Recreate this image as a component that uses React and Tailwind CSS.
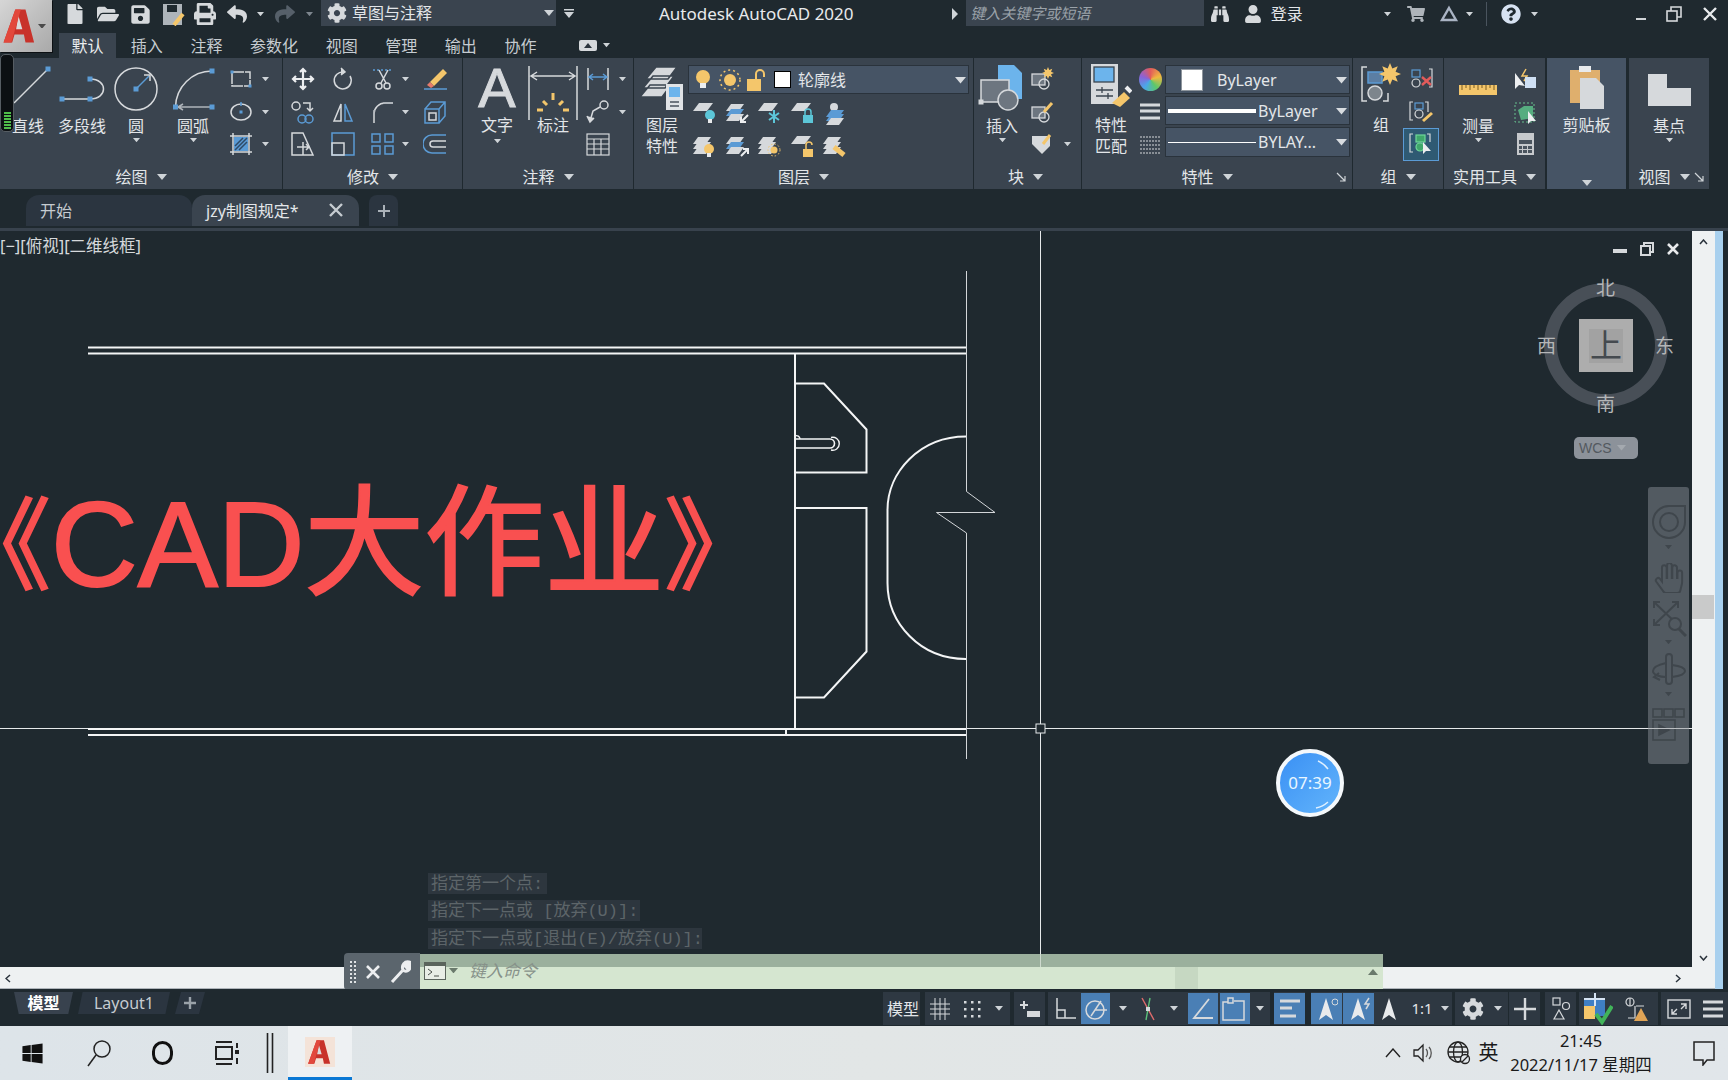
import React from 'react';
import { FaFile, FaFolderOpen, FaSave, FaPrint, FaReply, FaShare, FaCog, FaBinoculars, FaUser, FaShoppingCart, FaQuestionCircle, FaWindows, FaHandPaper } from 'react-icons/fa';

const G = '#d6d9dc', B = '#5b9bd5', Y = '#f4c66b', D = '#aeb4ba';

const S = ({ w = 24, h = 24, sw = 1.5, children }) => (
  <svg width={w} height={h} viewBox={`0 0 ${w} ${h}`} fill="none" stroke={G} strokeWidth={sw} className="block shrink-0">{children}</svg>
);
const Gp = ({ x, y, s = 5, c = B }) => <rect x={x - s / 2} y={y - s / 2} width={s} height={s} fill={c} stroke="none" />;
const Caret = ({ s = 9, c = '#cfd4d8' }) => (
  <svg width={s} height={s * 0.6} viewBox="0 0 10 6" className="block shrink-0"><path d="M0 0H10L5 6z" fill={c} /></svg>
);
const Launcher = () => (
  <svg width="10" height="10" viewBox="0 0 10 10" fill="none" stroke="#cfd4d8" strokeWidth="1.2" className="block shrink-0"><path d="M1 1L9 9M9 4V9H4" /></svg>
);
const Layer = ({ y, c = G, x = 0 }) => <path d={`M${x + 6} ${y}h13l-5 7h-13z`} fill={c} stroke="none" />;

function Panel({ className, title, launcher, children, pad = '', foot = '' }) {
  return (
    <div className={`shrink-0 h-[131px] bg-[#3a444f] flex flex-col ${className}`}>
      <div className={`h-[107px] flex ${pad}`}>{children}</div>
      <div className={`h-[24px] flex items-center justify-center gap-[9px] relative text-[16px] leading-[24px] text-[#e3e6e9] ${foot}`}>
        <span>{title}</span>
        <Caret s={10} />
        {launcher && <span className="absolute right-[6px] top-[7px]"><Launcher /></span>}
      </div>
    </div>
  );
}

function Big({ className, label, caret, children, two }) {
  return (
    <div className={`shrink-0 flex flex-col items-center pt-[5px] ${className}`}>
      <div className={`${two ? 'h-[52px]' : 'h-[54px]'} flex justify-center`}>{children}</div>
      <div className={`text-[16px] text-[#e3e6e9] text-center whitespace-pre-line ${two ? 'leading-[21px]' : 'leading-[18px]'}`}>{label}</div>
      {caret && <div className="mt-[3px]"><Caret s={7} /></div>}
    </div>
  );
}

const Col = ({ className, children }) => <div className={`shrink-0 flex flex-col pt-[5px] ${className}`}>{children}</div>;
const Row = ({ children, className = '' }) => <div className={`h-[32.5px] flex items-center justify-center ${className}`}>{children}</div>;

function Drop({ className, children }) {
  return (
    <div className={`bg-[#465465] shadow-[0_0_0_1px_#2a333c] flex items-center relative text-[#e3e6e9] text-[16px] ${className}`}>
      {children}
      <span className="absolute right-[2px] top-[11px]"><Caret s={11} c="#d8dce0" /></span>
    </div>
  );
}

const Cell = ({ className, children }) => <div className={`shrink-0 h-full flex items-center justify-center ${className}`}>{children}</div>;

const ALogo = ({ s = 46 }) => (
  <svg width={s} height={s} viewBox="0 0 46 46" className="block shrink-0">
    <path d="M17 2H30L41 44H30L28 34H16L13 44H2Z" fill="#c8322a" />
    <path d="M21 10L18 27H26Z" fill="#dbdbdb" />
    <path d="M17 2H24L12 44H2Z" fill="#e2483c" />
  </svg>
);

function TitleBar() {
  return (
    <div className="h-[28px] flex items-center text-[#e3e6e9]">
      <Cell className="w-[7px]" />
      <Cell className="w-[32px]"><FaFile size={20} color={G} /></Cell>
      <Cell className="w-[33px]"><FaFolderOpen size={22} color={G} /></Cell>
      <Cell className="w-[32px]"><FaSave size={21} color={G} /></Cell>
      <Cell className="w-[33px]">
        <S w={24} h={24}><rect x="2" y="2" width="19" height="21" fill={D} stroke="none" /><rect x="6" y="3" width="10" height="7" fill="#1f292f" stroke="none" /><path d="M13 23L22 12" stroke={Y} strokeWidth="4" /></S>
      </Cell>
      <Cell className="w-[32px]"><FaPrint size={22} color={G} /></Cell>
      <Cell className="w-[32px]"><FaReply size={20} color={G} /></Cell>
      <Cell className="w-[14px]"><Caret s={7} /></Cell>
      <Cell className="w-[2px]" />
      <Cell className="w-[32px]"><FaShare size={20} color="#56606a" /></Cell>
      <Cell className="w-[16px]"><Caret s={7} c="#7d868e" /></Cell>
      <Cell className="w-[4px]" />
      <div className="w-[240px] h-[26px] self-start bg-[#3a444f] flex items-center relative text-[16px]">
        <span className="ml-[6px] mr-[5px]"><FaCog size={20} color={G} /></span>草图与注释
        <span className="absolute right-[2px] top-[10px]"><Caret s={10} /></span>
      </div>
      <Cell className="w-[26px]">
        <svg width="10" height="10" viewBox="0 0 10 10" className="block"><path d="M0 0H10V1.5H0zM0 3H10L5 9z" fill="#cfd4d8" /></svg>
      </Cell>
      <div className="w-[79px]" />
      <div className="w-[300px] text-[17px] text-[#e8eaec] whitespace-nowrap">Autodesk AutoCAD 2020</div>
      <svg width="6" height="12" viewBox="0 0 6 12" className="block shrink-0"><path d="M0 0L6 6L0 12z" fill="#cfd4d8" /></svg>
      <div className="w-[8px]" />
      <div className="w-[243px] h-[26px] self-start bg-[#3a444f] flex items-center pl-[4px] italic text-[15px] text-[#9aa2a9]">键入关键字或短语</div>
      <Cell className="w-[33px]"><FaBinoculars size={18} color={G} /></Cell>
      <Cell className="w-[33px]"><FaUser size={18} color={G} /></Cell>
      <div className="w-[1px]" />
      <div className="w-[113px] text-[16px]">登录</div>
      <Cell className="w-[12px]"><Caret s={7} /></Cell>
      <Cell className="w-[46px]"><FaShoppingCart size={18} color={D} /></Cell>
      <Cell className="w-[20px]">
        <S w={20} h={18} sw={2.4}><path d="M10 3L17 15H3Z" stroke="#aab4c4" /></S>
      </Cell>
      <Cell className="w-[20px]"><Caret s={7} /></Cell>
      <div className="w-[14px] flex justify-center"><div className="w-px h-[24px] bg-[#4a545e]" /></div>
      <Cell className="w-[36px]"><FaQuestionCircle size={20} color="#d7e2f2" /></Cell>
      <Cell className="w-[10px]"><Caret s={7} /></Cell>
      <div className="w-[89px]" />
      <Cell className="w-[30px]"><div className="w-[10px] h-[2px] bg-[#d0d4d8] mt-[10px]" /></Cell>
      <Cell className="w-[36px]">
        <S w={16} h={16} sw={1.6}><rect x="1" y="5" width="10" height="10" /><path d="M5 5V1H15V11H11" /></S>
      </Cell>
      <Cell className="w-[36px]">
        <S w={14} h={14} sw={2.4}><path d="M1 1L13 13M13 1L1 13" stroke="#e8eaec" /></S>
      </Cell>
    </div>
  );
}

function Tabs() {
  const t = ['插入', '注释', '参数化', '视图', '管理', '输出', '协作'];
  return (
    <div className="h-[30px] flex items-end text-[16px] text-[#c6ccd1]">
      <div className="w-[7px]" />
      <div className="w-[57px] h-[25px] bg-[#3a444f] text-[#eceef0] flex items-center justify-center leading-none">默认</div>
      <div className="flex h-[25px] items-center pl-[1px]">
        {t.map((x) => <div key={x} className="px-[13.8px] leading-none">{x}</div>)}
        <div className="ml-[29px] w-[18px] h-[11px] rounded-[2px] bg-[#d6d9dc] flex items-center justify-center">
          <svg width="8" height="5" viewBox="0 0 8 5" className="block"><path d="M0 5L4 0L8 5z" fill="#2a333c" /></svg>
        </div>
        <div className="ml-[6px]"><Caret s={7} /></div>
      </div>
    </div>
  );
}

const Ic = {
  line: <S w={56} h={55}><path d="M14 40L48 6" /><Gp x={48} y={6} /><Gp x={9} y={45} /></S>,
  pline: <S w={52} h={55}><path d="M6 36H34M34 16C52 16 52 36 34 36" /><Gp x={6} y={36} /><Gp x={34} y={36} /><Gp x={34} y={16} /></S>,
  circle: <S w={56} h={55}><circle cx="28" cy="26" r="21" /><path d="M28 26L41 13" stroke={B} /><path d="M36 12H42V18" stroke={G} /><Gp x={28} y={26} /></S>,
  arc: <S w={58} h={55}><path d="M11.5 44C12 24 28 8 48 8" /><path d="M14 44H46M19 41L14 44L19 47" stroke={D} /><Gp x={11.5} y={44} /><Gp x={48} y={44} /><Gp x={48} y={8} /></S>,
  rect: <S><rect x="3" y="5" width="18" height="14" strokeDasharray="12 1" /><Gp x={3} y={5} s={3} /><Gp x={21} y={19} s={3} /></S>,
  ell: <S><ellipse cx="12" cy="12" rx="10" ry="8" /><Gp x={12} y={12} s={3} /><path d="M12 2V6" stroke={B} /></S>,
  hatch: <S><path d="M1 4H23M1 20H23M4 1V23M20 1V23" /><rect x="5" y="5" width="14" height="14" fill={B} stroke="none" /><path d="M6 18L18 6M10 18L18 10M6 14L14 6" stroke="#2f4a66" /></S>,
  move: <S sw={2.2}><path d="M12 2V22M2 12H22M9 5L12 2L15 5M9 19L12 22L15 19M5 9L2 12L5 15M19 9L22 12L19 15" stroke="#eceef0" /></S>,
  rot: <S><path d="M13 5A8.5 8.5 0 1 0 19 9" /><path d="M10 1L14 5L10 8" fill={G} /></S>,
  trim: <S><path d="M2 3H22" stroke={B} strokeDasharray="2 2" /><path d="M8 3L15 16M17 3L10 16" /><circle cx="8" cy="19" r="3" /><circle cx="16" cy="19" r="3" /></S>,
  erase: <S><path d="M7 15L20 2L24 6L11 19Z" fill={Y} stroke="none" /><path d="M4 18L7 15L11 19L8 21Z" fill="#e57a6b" stroke="none" /><path d="M1 22H24" stroke={B} /></S>,
  copy: <S><circle cx="5" cy="6" r="4" /><path d="M12 3H19V10M16 8L19 11L22 8" /><circle cx="11" cy="19" r="4" stroke={B} /><circle cx="18" cy="19" r="4" stroke={B} /></S>,
  mirror: <S><path d="M10 4V21H3Z" /><path d="M14 4V21H21Z" stroke={B} /></S>,
  fillet: <S><path d="M3 23V14C3 8 8 3 14 3H22" /><path d="M3 16V10M12 3H22" stroke={D} /></S>,
  box: <S><path d="M2 9H16V23H2ZM2 9L8 2H22V16L16 23M16 9L22 2" stroke={B} /><rect x="6" y="13" width="7" height="7" stroke={G} /></S>,
  stretch: <S><path d="M1 1H12L22 23H1Z" /><path d="M6 15H18M15 12L18 15L15 18M12 10V23" stroke={G} /></S>,
  scale: <S><rect x="1" y="1" width="22" height="22" stroke={B} /><rect x="1" y="11" width="12" height="12" /></S>,
  array: <S><g stroke={B}><rect x="1" y="2" width="8" height="8" /><rect x="14" y="2" width="8" height="8" /><rect x="1" y="14" width="8" height="8" /><rect x="14" y="14" width="8" height="8" /></g></S>,
  offset: <S><path d="M23 3H9A9 9 0 0 0 9 21H23" stroke={B} /><path d="M23 9H10A3 3 0 0 0 10 15H23" stroke={G} /></S>,
  dim: <S w={50} h={58} sw={1.5}><path d="M1 3V57M49 3V57M3 13H47M9 9L3 13L9 17M41 9L47 13L41 17" /><g fill="none" stroke={Y} strokeWidth="3"><path d="M25 30V37M15 38L19 42M35 38L31 42M9 47H15M35 47H41" /></g></S>,
  dimS: <S><path d="M2 1V23M22 1V23" /><path d="M3 10H21M7 7L3 10L7 13M17 7L21 10L17 13" stroke={B} /></S>,
  leader: <S><circle cx="18" cy="5" r="4" /><path d="M14 7L7 11L4 21" /><path d="M1 16L4 22L8 18" fill={G} /></S>,
  table: <S sw={1.2}><rect x="1" y="2" width="22" height="21" /><path d="M1 7H23M1 12H23M1 17H23M8 7V23M15 7V23" /></S>,
};

function LayerIcon({ kind }) {
  const bulb = (x, y, c) => <g stroke="none"><circle cx={x} cy={y} r="5" fill={c} /><rect x={x - 2} y={y + 4} width="4" height="4" fill="#e8eaec" /></g>;
  const lock = (x, y, c, open) => <g><path d={open ? `M${x - 2} ${y}V${y - 4}a3 3 0 0 1 6 0` : `M${x - 3} ${y}V${y - 3}a3 3 0 0 1 6 0V${y}`} stroke={c} strokeWidth="1.5" /><rect x={x - 5} y={y} width="10" height="8" fill={c} stroke="none" /></g>;
  const stack = <g><Layer y={3} /><Layer y={8} c={B} /><Layer y={13} c={G} /></g>;
  const map = {
    a: <g><path d="M7 2h14l-6 8h-14z" fill={G} stroke="none" />{bulb(18, 14, '#5cc6d8')}</g>,
    b: <g>{stack}<path d="M23 14L16 21M16 16V21H21" stroke="#eceef0" strokeWidth="2" /></g>,
    c: <g><path d="M7 2h14l-6 8h-14z" fill={G} stroke="none" /><path d="M17 9V22M12 12L22 19M22 12L12 19" stroke="#5cc6d8" strokeWidth="2" /></g>,
    d: <g><path d="M7 2h14l-6 8h-14z" fill={G} stroke="none" />{lock(18, 14, '#5cc6d8')}</g>,
    e: <g><circle cx="12" cy="6" r="4" fill={G} stroke="none" /><Layer y={9} c={B} x={3} /><Layer y={13} c={B} x={3} /><Layer y={17} c={G} x={3} /></g>,
    f: <g><Layer y={3} /><Layer y={8} /><Layer y={13} />{bulb(17, 15, Y)}</g>,
    g: <g>{stack}<path d="M16 22L23 15M18 15H23V20" stroke="#eceef0" strokeWidth="2" /></g>,
    h: <g><Layer y={3} /><Layer y={8} /><Layer y={13} /><circle cx="17" cy="16" r="3.5" fill={Y} stroke="none" /><circle cx="17" cy="16" r="6" stroke={Y} strokeDasharray="1.5 2" /></g>,
    i: <g><path d="M7 2h14l-6 8h-14z" fill={G} stroke="none" />{lock(18, 15, Y, true)}</g>,
    j: <g><Layer y={3} /><Layer y={8} /><Layer y={13} /><path d="M12 13L22 21" stroke={Y} strokeWidth="5" /></g>,
  };
  return <S w={26} h={24} sw={1}>{map[kind]}</S>;
}

const Spark = ({ x, y, r = 10 }) => {
  const pts = [];
  for (let i = 0; i < 16; i++) {
    const a = (i / 16) * Math.PI * 2;
    const q = i % 2 ? r * 0.55 : r;
    pts.push(`${x + Math.cos(a) * q},${y + Math.sin(a) * q}`);
  }
  return <polygon points={pts.join(' ')} fill={Y} stroke="none" />;
};

function Ribbon() {
  return (
    <div className="h-[131px] flex gap-[1px] relative">
      <Panel className="w-[282px]" title="绘图">
        <Big className="w-[56px]" label="直线">{Ic.line}</Big>
        <Big className="w-[52px]" label="多段线">{Ic.pline}</Big>
        <Big className="w-[56px]" label="圆" caret>{Ic.circle}</Big>
        <Big className="w-[58px]" label="圆弧" caret>{Ic.arc}</Big>
        <Col className="w-[38px]"><Row>{Ic.rect}</Row><Row>{Ic.ell}</Row><Row>{Ic.hatch}</Row></Col>
        <Col className="w-[10px]"><Row><Caret s={7} /></Row><Row><Caret s={7} /></Row><Row><Caret s={7} /></Row></Col>
      </Panel>
      <Panel className="w-[179px]" title="修改">
        <Col className="w-[40px]"><Row>{Ic.move}</Row><Row>{Ic.copy}</Row><Row>{Ic.stretch}</Row></Col>
        <Col className="w-[40px]"><Row>{Ic.rot}</Row><Row>{Ic.mirror}</Row><Row>{Ic.scale}</Row></Col>
        <Col className="w-[40px]"><Row>{Ic.trim}</Row><Row>{Ic.fillet}</Row><Row>{Ic.array}</Row></Col>
        <Col className="w-[4px]"><Row><Caret s={7} /></Row><Row><Caret s={7} /></Row><Row><Caret s={7} /></Row></Col>
        <Col className="w-[55px]"><Row>{Ic.erase}</Row><Row>{Ic.box}</Row><Row>{Ic.offset}</Row></Col>
      </Panel>
      <Panel className="w-[170px]" title="注释" pad="pl-[5px]">
        <Big className="w-[58px]" label="文字" caret two>
          <span className="text-[56px] leading-[50px] text-[#d6d9dc] [-webkit-text-stroke:1px_#d6d9dc] [font-family:'Liberation_Sans',sans-serif]">A</span>
        </Big>
        <Big className="w-[54px]" label="标注" two>{Ic.dim}</Big>
        <Col className="w-[36px]"><Row>{Ic.dimS}</Row><Row>{Ic.leader}</Row><Row>{Ic.table}</Row></Col>
        <Col className="w-[12px]"><Row><Caret s={7} /></Row><Row><Caret s={7} /></Row></Col>
      </Panel>
      <Panel className="w-[339px]" title="图层" pad="pl-[5px]">
        <Big className="w-[46px]" label={'图层\n特性'} two>
          <S w={46} h={48}><path d="M17 4h21l-9 12h-22zM14 13h21l-9 12h-22zM11 22h21l-9 12h-22z" fill={G} stroke="#3a444f" /><rect x="27" y="21" width="17" height="26" fill="#e0e3e6" stroke="none" /><rect x="30" y="24" width="11" height="10" fill="#6cb4ec" stroke="none" /><path d="M31 39H40M31 43H40" stroke="#49535e" /></S>
        </Big>
        <div className="flex flex-col pt-[8px] pl-[4px]">
          <Drop className="w-[279px] h-[27px]">
            <div className="w-[28px] flex justify-center"><S w={20} h={24} sw={1}><circle cx="10" cy="9" r="7" fill={Y} stroke="none" /><rect x="7" y="15" width="6" height="5" fill="#eceef0" stroke="none" /></S></div>
            <div className="w-[26px] flex justify-center"><S w={24} h={24} sw={1.5}><circle cx="12" cy="12" r="6" fill={Y} stroke="none" /><circle cx="12" cy="12" r="10" stroke={Y} strokeDasharray="2 3" /></S></div>
            <div className="w-[26px] flex justify-center"><S w={22} h={24} sw={2}><path d="M11 12V6a4 4 0 0 1 8 0V9" stroke={Y} /><rect x="2" y="11" width="14" height="12" fill={Y} stroke="none" /></S></div>
            <div className="w-[17px] h-[17px] ml-[5px] bg-white border border-black" />
            <span className="ml-[7px]">轮廓线</span>
          </Drop>
          <div className="flex h-[33px] items-center mt-[3px]">
            {['a', 'b', 'c', 'd', 'e'].map((k) => <div key={k} className="w-[32.5px] flex justify-center"><LayerIcon kind={k} /></div>)}
          </div>
          <div className="flex h-[33px] items-center">
            {['f', 'g', 'h', 'i', 'j'].map((k) => <div key={k} className="w-[32.5px] flex justify-center"><LayerIcon kind={k} /></div>)}
          </div>
        </div>
      </Panel>
      <Panel className="w-[107px]" title="块" pad="pl-[4px]" foot="pr-[4px]">
        <Big className="w-[48px]" label="插入" caret>
          <S w={48} h={50}>
            <path d="M20 2H36L44 10V36H20Z" fill="#6cb4ec" stroke="none" />
            <rect x="3" y="17" width="28" height="22" fill="#6d7680" stroke={G} />
            <circle cx="30" cy="37" r="10" fill="#6d7680" stroke={G} />
            <Gp x={3} y={39} c={G} />
          </S>
        </Big>
        <Col className="w-[32px]">
          <Row><S sw={1.3}><rect x="2" y="7" width="13" height="11" fill="#6d7680" /><circle cx="14" cy="17" r="5" /><Spark x={18} y={6} r={6} /></S></Row>
          <Row><S sw={1.3}><rect x="2" y="7" width="13" height="11" fill="#6d7680" /><circle cx="14" cy="17" r="5" /><path d="M14 12L22 3" stroke={Y} strokeWidth="3" /></S></Row>
          <Row><S sw={1}><path d="M2 4H20V14L12 22L2 12Z" fill={G} stroke="none" /><path d="M13 12L20 3" stroke={Y} strokeWidth="3" /></S></Row>
        </Col>
        <Col className="w-[18px]"><Row /><Row /><Row><Caret s={7} /></Row></Col>
      </Panel>
      <Panel className="w-[270px]" title="特性" launcher pad="pl-[8px]" foot="pr-[20px]">
        <Big className="w-[42px]" label={'特性\n匹配'} two>
          <S w={42} h={44} sw={1.3}>
            <rect x="1" y="1" width="27" height="40" fill="#d6d9dc" stroke="none" />
            <rect x="4" y="4" width="20" height="15" fill="#6cb4ec" stroke="#3a444f" />
            <path d="M6 27H23M6 33H23M12 24V30M18 30V36" stroke="#3a444f" />
            <path d="M22 40L34 29L40 35L30 44Z" fill={Y} stroke="none" /><path d="M36 24L41 29" stroke="#eceef0" strokeWidth="4" />
          </S>
        </Big>
        <Col className="w-[30px] items-center pl-[6px]">
          <Row>
            <div className="w-[23px] h-[23px] rounded-full bg-[conic-gradient(#e25b5b,#f0b840,#5cc86a,#4aa8e8,#8a62d8,#e25b5b)]" />
          </Row>
          <Row><S w={22} h={24} sw={3}><path d="M1 5H21M1 11H21M1 18H21" /></S></Row>
          <Row><S w={22} h={24} sw={1}><path d="M1 5H21M1 9H21M1 13H21M1 17H21M1 21H21" strokeDasharray="2 1" /></S></Row>
        </Col>
        <div className="flex flex-col pt-[8px] pl-[4px] gap-[4px]">
          <Drop className="w-[183px] h-[27px]">
            <div className="w-[22px] h-[22px] ml-[15px] bg-white border border-[#8e959c]" />
            <span className="ml-[14px]">ByLayer</span>
          </Drop>
          <Drop className="w-[183px] h-[27px]">
            <div className="w-[88px] h-[4px] ml-[2px] bg-white" />
            <span className="ml-[2px]">ByLayer</span>
          </Drop>
          <Drop className="w-[183px] h-[28px]">
            <div className="w-[88px] h-px ml-[2px] bg-white" />
            <span className="ml-[2px]">BYLAY...</span>
          </Drop>
        </div>
      </Panel>
      <Panel className="w-[90px]" title="组" pad="pl-[6px]">
        <Big className="w-[44px]" label="组" two>
          <S w={44} h={44} sw={1.5}>
            <path d="M8 4H3V38H8M29 30V38H24" stroke={G} />
            <rect x="9" y="9" width="14" height="11" stroke={B} fill="#5b7ea3" />
            <circle cx="16" cy="30" r="7" fill="#7d858c" />
            <Spark x={31} y={11} r={11} />
          </S>
        </Big>
        <Col className="w-[36px]">
          <Row><S sw={1.2}><path d="M20 2H23V20H20" /><rect x="3" y="3" width="8" height="7" stroke={B} /><circle cx="7" cy="16" r="4" /><path d="M13 10L22 18M22 10L13 18" stroke="#e25b5b" strokeWidth="2.4" /></S></Row>
          <Row><S sw={1.2}><path d="M4 2H1V20H4M16 2H19V12" /><rect x="6" y="3" width="8" height="6" stroke={B} /><circle cx="10" cy="14" r="4" /><path d="M14 21L23 13" stroke={Y} strokeWidth="3" /></S></Row>
          <Row className="bg-[#2f5a73] border border-[#5b9bd5] h-[30px]">
            <S sw={1.2}><path d="M4 2H1V20H4M18 2H21V10" /><rect x="7" y="3" width="9" height="7" fill="#3fa76b" stroke="#6fd79a" /><circle cx="11" cy="15" r="4" fill="#3fa76b" stroke="#6fd79a" /><path d="M14 10V22L17 19L22 19Z" fill="#eceef0" stroke="none" /></S>
          </Row>
        </Col>
      </Panel>
      <Panel className="w-[101px]" title="实用工具" pad="pl-[6px]">
        <Big className="w-[56px]" label="测量" caret>
          <S w={42} h={50} sw={1}>
            <rect x="2" y="22" width="38" height="10" fill={Y} stroke="none" />
            <path d="M5 22V27M9 22V25M13 22V27M17 22V25M21 22V27M25 22V25M29 22V27M33 22V25M37 22V27" stroke="#7b5c22" />
          </S>
        </Big>
        <Col className="w-[38px]">
          <Row><S sw={1}><path d="M2 6V22L6 18L12 19Z" fill="#eceef0" stroke="none" /><path d="M13 2L9 9L14 9L11 14" stroke={Y} strokeWidth="1.5" /><rect x="12" y="10" width="11" height="11" fill="#cfe0f4" stroke="none" /></S></Row>
          <Row><S sw={1}><rect x="2" y="3" width="19" height="19" stroke="#66c08e" strokeDasharray="2 2" /><path d="M5 10L11 6H20V18L8 20Z" fill="#56ad80" stroke="none" /><path d="M15 11V24L18 21L23 21Z" fill="#eceef0" stroke="none" /></S></Row>
          <Row><div className="w-[17px] h-[22px] bg-[#c6c9cc] grid grid-cols-3 gap-[1px] p-[2px] content-end"><i className="bg-[#4a545e] col-span-3 h-[4px] mb-[1px]" /><i className="bg-[#4a545e] h-[3px]" /><i className="bg-[#4a545e] h-[3px]" /><i className="bg-[#4a545e] h-[3px]" /><i className="bg-[#4a545e] h-[3px]" /><i className="bg-[#4a545e] h-[3px]" /><i className="bg-[#4a545e] h-[3px]" /></div></Row>
        </Col>
      </Panel>
      <div className="w-0" />
      <div className="shrink-0 w-[79px] h-[131px] bg-[#465465] flex flex-col items-center pt-[7px]">
        <S w={36} h={44} sw={1}>
          <rect x="1" y="5" width="30" height="33" fill="#dfaf6d" stroke="none" />
          <rect x="10" y="1" width="12" height="6" fill="#e8eaec" stroke="none" />
          <path d="M11 13H27L35 21V44H11Z" fill={G} stroke="none" />
        </S>
        <div className="text-[16px] leading-[18px] mt-[7px] text-[#e3e6e9]">剪贴板</div>
        <div className="mt-[46px]"><Caret s={10} /></div>
      </div>
      <div className="w-px" />
      <div className="shrink-0 w-[80px] h-[131px] bg-[#3a444f] flex flex-col">
        <Big className="h-[107px]" label="基点" caret>
          <div className="pt-[10px]"><S w={44} h={34} sw={1}><path d="M1 1H20V15H44V33H1Z" fill={G} stroke="none" /></S></div>
        </Big>
        <div className="h-[24px] flex items-center justify-center gap-[9px] relative text-[16px] text-[#e3e6e9]">
          <span className="-ml-[10px]">视图</span><Caret s={10} />
          <span className="absolute right-[5px] top-[7px]"><Launcher /></span>
        </div>
      </div>
      <div className="absolute left-0 top-[-4px] w-[14px] h-[78px] rounded-[5px] bg-[#0c1013] border border-[#565d63] flex flex-col justify-end items-center gap-[1px] pb-[2px]">
        {[0, 1, 2, 3, 4, 5].map((i) => <i key={i} className="block w-[7px] h-[2px] bg-[#4fbe4a]" />)}
      </div>
    </div>
  );
}

function DocTabs() {
  return (
    <div className="h-[42px] relative flex pt-[6px] border-b-[3px] border-[#38424d]">
      <div className="w-[26px]" />
      <div className="w-[166px] h-[31px] bg-[#2b3540] rounded-t-[13px] flex items-center pl-[14px] text-[16px] text-[#c6ccd1]">开始</div>
      <div className="w-[167px] h-[31px] bg-[#3a444f] rounded-t-[13px] flex items-center pl-[14px] text-[16px] text-[#e3e6e9] relative">
        jzy制图规定*
        <span className="absolute right-[16px] top-[8px]"><S w={14} h={14} sw={2.4}><path d="M1 1L13 13M13 1L1 13" stroke="#c6ccd1" /></S></span>
      </div>
      <div className="ml-[10px] w-[29px] h-[31px] bg-[#2b3540] rounded-t-[8px] flex items-center justify-center">
        <S w={14} h={14} sw={2}><path d="M7 1V13M1 7H13" stroke="#aab1b8" /></S>
      </div>
    </div>
  );
}

function Drawing() {
  return (
    <svg width="1692" height="736" viewBox="0 231 1692 736" fill="none" className="absolute left-0 top-0">
      <g stroke="#e6e9eb" strokeWidth="1">
        <path d="M1040.5 231V967" />
        <path d="M0 728.5H88M966 728.5H1692" />
        <rect x="1036" y="724" width="9" height="9" fill="#1f292f" />
        <path d="M966.5 271V491.5L995 512.5H936.5L966.5 533V759" stroke="#d3d6d9" />
      </g>
      <g stroke="#f4f5f6" strokeWidth="2">
        <path d="M88 347.5H966M88 353.5H966M88 729H966M88 735H966" />
        <path d="M795 354V729M786 729V735" />
        <path d="M795 383.5H824L866.5 429.5V472.5H795" />
        <path d="M795 508H866.5V651.5L824 697.5H795" />
        <path d="M966 436.5C920 436.5 887.5 472 887.5 510V583C887.5 623 920 659 966 659" />
        <path d="M795 439H830M795 448H830" strokeWidth="1.6" />
        <path d="M830 439A4.5 4.5 0 1 1 830 448" strokeWidth="1.6" />
        <path d="M831 437.5A6.5 6.5 0 1 1 831 450" strokeWidth="1.4" />
        <path d="M795 436A3.5 3.5 0 0 1 800 439" strokeWidth="1.4" />
      </g>
    </svg>
  );
}

function Nav() {
  const c = '#3f464c';
  return (
    <div className="absolute left-[1648px] top-[256px] w-[41px] h-[277px] rounded-[3px] bg-[#525a61] flex flex-col items-center pt-[17px]">
      <svg width="36" height="36" viewBox="0 0 36 36" fill="none" stroke={c} strokeWidth="2" className="block"><path d="M18 2H34V18A16 16 0 1 1 18 2Z" /><circle cx="18" cy="18" r="9" /></svg>
      <div className="mt-[5px]"><Caret s={7} c={c} /></div>
      <div className="mt-[14px]"><FaHandPaper size={30} color="#525a61" stroke={c} strokeWidth={34} /></div>
      <svg width="36" height="38" viewBox="0 0 36 38" fill="none" stroke={c} strokeWidth="2" className="block mt-[6px]"><path d="M3 3L27 26M27 3L3 26M3 9V3H9M21 3H27V9M3 20V26H9" /><circle cx="24" cy="25" r="6" fill="#525a61" /><path d="M28 30L35 37" strokeWidth="3" /></svg>
      <div className="mt-[3px]"><Caret s={7} c={c} /></div>
      <svg width="34" height="36" viewBox="0 0 34 36" fill="none" stroke={c} strokeWidth="2" className="block mt-[7px]"><rect x="14" y="3" width="6" height="30" rx="3" /><path d="M14 12C5 14 1 17 1 20C1 24 8 26 14 26M20 14C28 15 33 17 33 20C33 23 28 25 20 26M7 22L2 26L8 29" /></svg>
      <div className="mt-[5px]"><Caret s={7} c={c} /></div>
      <svg width="34" height="34" viewBox="0 0 34 34" fill="none" stroke={c} strokeWidth="1.6" className="block mt-[11px]"><rect x="1" y="1" width="9" height="8" /><rect x="12" y="1" width="9" height="8" /><rect x="23" y="1" width="9" height="8" /><rect x="1" y="12" width="22" height="20" /><path d="M7 17L17 22L7 27Z" fill={c} /></svg>
      <div className="absolute left-0 top-[241px] w-full h-px bg-[#b9bdc0]" />
    </div>
  );
}

const hist = "absolute left-[428px] h-[21px] bg-[#2d363e] text-[17px] leading-[23px] pl-[3px] text-[#5d6569] whitespace-nowrap [font-family:'Liberation_Mono','Noto_Sans_CJK_SC',monospace]";

function Viewport() {
  return (
    <div className="w-[1692px] h-[736px] relative overflow-hidden bg-[#1f292f]">
      <Drawing />
      <div className="absolute left-0 top-[5px] text-[16.5px] leading-[20px] text-[#d6d9dc] whitespace-nowrap">[−][俯视][二维线框]</div>
      <div className="absolute left-[-49px] top-[253px] whitespace-nowrap text-[120px] leading-[120px] text-[#f95050] [-webkit-text-stroke:2px_#f95050] [font-family:'Liberation_Sans','Noto_Sans_CJK_SC',sans-serif]">
        <span className="text-[100px] align-[5px]">《</span>CAD大作业<span className="text-[100px] align-[5px]">》</span>
      </div>

      <div className="absolute left-[1613px] top-[11px] w-[66px] flex items-center justify-between">
        <div className="w-[14px] h-[4px] bg-[#d6d9dc] mt-[4px]" />
        <S w={14} h={14} sw={2}><rect x="1" y="4" width="9" height="9" /><path d="M4 3V1H13V10H11" /></S>
        <S w={12} h={12} sw={2.6}><path d="M1 1L11 11M11 1L1 11" stroke="#e8eaec" /></S>
      </div>

      <div className="absolute left-[1544px] top-[52px] w-[124px] h-[124px] rounded-full border-[13px] border-[#484f57]" />
      <div className="absolute left-[1579px] top-[88px] w-[54px] h-[53px] bg-[#adadad] flex items-center justify-center">
        <div className="w-[34px] h-[34px] bg-[#a2a2a2] text-[#454a4f] text-[32px] leading-[32px] text-center">上</div>
      </div>
      <div className="absolute left-[1596px] top-[45px] text-[19px] leading-[24px] text-[#b4b6b8]">北</div>
      <div className="absolute left-[1596px] top-[161px] text-[19px] leading-[24px] text-[#b4b6b8]">南</div>
      <div className="absolute left-[1537px] top-[103px] text-[19px] leading-[24px] text-[#b4b6b8]">西</div>
      <div className="absolute left-[1655px] top-[103px] text-[19px] leading-[24px] text-[#b4b6b8]">东</div>
      <div className="absolute left-[1574px] top-[206px] w-[64px] h-[22px] rounded-[5px] bg-[#8c929a] flex items-center pl-[5px] gap-[5px] text-[14px] text-[#53595f] [font-family:'Liberation_Sans',sans-serif]">
        WCS <Caret s={9} c="#a4a9af" />
      </div>
      <Nav />

      <div className="absolute left-[1276px] top-[518px] w-[68px] h-[68px] rounded-full border-[4px] border-[#f4f8fb] bg-gradient-to-br from-[#3a90f4] to-[#62b4fb] flex items-center justify-center text-[17px] text-[#e9f6ff]">
        07:39
        <svg width="60" height="60" viewBox="0 0 60 60" fill="none" stroke="#dff0ff" strokeWidth="1.5" className="absolute left-0 top-0 block">
          <path d="M38 8A24 24 0 0 1 48 16" />
          <path d="M36 55A26 26 0 0 0 48 49" />
        </svg>
      </div>

      <div className={`${hist} top-[642px] w-[119px]`}>指定第一个点:</div>
      <div className={`${hist} top-[669px] w-[212px]`}>指定下一点或 [放弃(U)]:</div>
      <div className={`${hist} top-[697px] w-[274px]`}>指定下一点或[退出(E)/放弃(U)]:</div>
    </div>
  );
}

function Command() {
  return (
    <div className="absolute left-[344px] top-[722px] h-[37px] flex">
      <div className="w-[76px] h-[37px] bg-[#5b656d] rounded-l-[4px] flex items-center">
        <div className="ml-[6px] grid grid-cols-2 gap-[2px]">
          {[0, 1, 2, 3, 4, 5, 6, 7, 8, 9, 10, 11].map((i) => <i key={i} className="block w-[2px] h-[2px] bg-[#dfe2e4]" />)}
        </div>
        <div className="ml-[10px]"><S w={14} h={14} sw={2.6}><path d="M1 1L13 13M13 1L1 13" stroke="#eceef0" /></S></div>
        <div className="ml-[9px]"><S w={22} h={24} sw={3}><path d="M3 22L14 10M14 10C12 5 16 1 20 2L16 6L18 8L21 5C22 10 17 13 14 10" stroke="#eceef0" /></S></div>
      </div>
      <div className="w-[963px] h-[35px] mt-[1px] relative bg-[#d5e6d0] overflow-hidden">
        <div className="absolute inset-x-0 top-0 h-[13px] bg-[#9bb09d]" />
        <div className="absolute left-[620px] top-0 w-px h-[13px] bg-[#cdd9cd]" />
        <div className="absolute left-[755px] top-[13px] w-[23px] h-[22px] bg-[#c6d8c2]" />
        <div className="absolute inset-0 flex items-center pb-[2px]">
          <div className="ml-[4px]">
            <svg width="22" height="18" viewBox="0 0 22 18" className="block"><rect x=".5" y=".5" width="21" height="17" fill="#e8eee6" stroke="#5a645c" /><rect x="1" y="1" width="20" height="3" fill="#5a645c" /><path d="M4 7L8 10L4 13M10 14H15" stroke="#4a504a" fill="none" /></svg>
          </div>
          <div className="ml-[3px]"><Caret s={9} c="#6a7a6c" /></div>
          <span className="ml-[11px] italic text-[17px] text-[#87928a]">键入命令</span>
        </div>
        <div className="absolute right-[5px] top-[15px]">
          <svg width="10" height="6" viewBox="0 0 10 6" className="block"><path d="M0 6L5 0L10 6z" fill="#6a7a6c" /></svg>
        </div>
      </div>
    </div>
  );
}

function Main() {
  return (
    <div className="flex h-[758px] shrink-0">
      <div className="w-[1715px] relative">
        <div className="flex h-[736px]">
          <Viewport />
          <div className="w-[23px] h-[736px] bg-[#eef1f2] relative">
            <div className="absolute left-[7px] top-[8px]"><S w={9} h={6} sw={1.5}><path d="M1 5L4.5 1L8 5" stroke="#2a333c" /></S></div>
            <div className="absolute left-0 top-[364px] w-[22px] h-[24px] bg-[#c9caca]" />
            <div className="absolute left-[7px] top-[724px]"><S w={9} h={6} sw={1.5}><path d="M1 1L4.5 5L8 1" stroke="#2a333c" /></S></div>
          </div>
        </div>
        <div className="h-[22px] bg-[#eef1f2] border-b-[1px] border-[#aeb4ba] relative">
          <div className="absolute left-[5px] top-[7px]"><S w={6} h={9} sw={1.5}><path d="M5 1L1 4.5L5 8" stroke="#2a333c" /></S></div>
          <div className="absolute left-[1675px] top-[7px]"><S w={6} h={9} sw={1.5}><path d="M1 1L5 4.5L1 8" stroke="#2a333c" /></S></div>
        </div>
        <Command />
      </div>
      <div className="w-[8px] bg-[#a8d0ee]" />
    </div>
  );
}

const A = 'bg-[#4a7fb5]';
function Seg({ className, children }) {
  return <div className={`shrink-0 h-[33px] bg-[#2e3842] flex items-center ${className}`}>{children}</div>;
}
const Sc = ({ className, children }) => <div className={`shrink-0 h-[33px] flex items-center justify-center ${className}`}>{children}</div>;
const Act = ({ className = 'w-[30px]', children }) => <div className={`shrink-0 h-[31px] flex items-center justify-center ${A} ${className}`}>{children}</div>;
const Anno = ({ extra }) => (
  <S w={22} h={26} sw={1}>
    <path d="M10 2L17 24L10 19L3 24Z" fill="#e8eaec" stroke="none" />
    {extra}
  </S>
);

function StatusRow() {
  return (
    <div className="h-[37px] shrink-0 relative flex items-start pt-[3px] bg-[#1f292f]">
      <div className="ml-[14px] w-[59px] h-[22px] bg-[#38424e] [clip-path:polygon(0_0,100%_0,92%_100%,8%_100%)] flex items-center justify-center text-[16px] font-bold text-white leading-none">模型</div>
      <div className="ml-[5px] w-[92px] h-[22px] bg-[#2b3540] [clip-path:polygon(5%_0,100%_0,95%_100%,0_100%)] flex items-center justify-center text-[16px] text-[#c6ccd1] leading-none">Layout1</div>
      <div className="ml-[5px] w-[30px] h-[22px] bg-[#2b3540] [clip-path:polygon(20%_0,100%_0,80%_100%,0_100%)] flex items-center justify-center">
        <S w={12} h={12} sw={2.4}><path d="M6 0V12M0 6H12" stroke="#9aa2a9" /></S>
      </div>
      <div className="absolute left-[883px] top-[3px] flex text-[#e3e6e9]">
        <Seg className="w-[37px] justify-center pl-[3px] text-[16px] leading-none">模型</Seg>
        <Seg className="ml-[5px] w-[85px]">
          <Sc className="w-[30px]"><S w={22} h={24} sw={1}><path d="M1 7H21M1 12H21M1 17H21M6 1V23M11 1V23M16 1V23" /></S></Sc>
          <Sc className="w-[33px]"><svg width="18" height="18" viewBox="0 0 18 18" className="block"><g fill={G}>{[1, 8, 15].map((x) => [1, 8, 15].map((y) => <rect key={`${x}${y}`} x={x} y={y} width="2.5" height="2.5" />))}</g></svg></Sc>
          <Sc className="w-[22px]"><Caret s={8} /></Sc>
        </Seg>
        <Seg className="ml-[4px] w-[31px] justify-center">
          <S w={22} h={20} sw={2}><path d="M5 2V10M1 6H9" /><rect x="8" y="12" width="13" height="6" fill={G} stroke="none" /></S>
        </Seg>
        <Seg className="ml-[3px] w-[222px]">
          <Sc className="w-[33px]"><S w={24} h={24} sw={1.5}><path d="M4 1V21H23M4 13H12V21" /></S></Sc>
          <Act className="w-[29px]"><S w={24} h={26} sw={1.5}><circle cx="11" cy="14" r="9" /><path d="M7 20L17 5M11 14H23" /></S></Act>
          <Sc className="w-[26px]"><Caret s={8} /></Sc>
          <Sc className="w-[24px]"><S w={16} h={26} sw={1.4}><path d="M2 2L14 24" stroke="#e06c6c" /><path d="M10 2L6 24" stroke="#5cc07a" /><Gp x={8} y={13} s={4} c={G} /></S></Sc>
          <Sc className="w-[28px]"><Caret s={8} /></Sc>
          <Act><S w={24} h={24} sw={1.8}><path d="M18 2L3 21H22" /></S></Act>
          <div className="w-[2px]" />
          <Act><S w={26} h={26} sw={1.5}><path d="M6 6H1V24H22V5H12" /><rect x="6" y="2" width="5" height="5" /></S></Act>
          <Sc className="w-[20px]"><Caret s={8} /></Sc>
        </Seg>
        <Seg className="ml-[4px] w-[31px] justify-center">
          <Act className="w-[31px]"><S w={24} h={24} sw={3}><path d="M2 4H22M2 11H14M2 19H18" /></S></Act>
        </Seg>
        <Seg className="ml-[6px] w-[141px]">
          <Act className="w-[31px]"><Anno extra={<circle cx="19" cy="6" r="3" stroke={G} />} /></Act>
          <Act className="w-[31px] ml-px"><Anno extra={<path d="M21 2L17 8H21L18 13" stroke={G} strokeWidth="1.5" />} /></Act>
          <Sc className="w-[32px]"><Anno /></Sc>
          <Sc className="w-[32px] text-[15px]">1:1</Sc>
          <Sc className="w-[14px]"><Caret s={8} /></Sc>
        </Seg>
        <Seg className="ml-[3px] w-[53px]">
          <Sc className="w-[35px]"><FaCog size={22} color={G} /></Sc>
          <Sc className="w-[16px]"><Caret s={8} /></Sc>
        </Seg>
        <Seg className="ml-px w-[31px] justify-center"><S w={24} h={24} sw={2.4}><path d="M12 1V23M1 12H23" /></S></Seg>
        <Seg className="ml-[5px] w-[31px] justify-center">
          <S w={20} h={26} sw={1.2}><rect x="2" y="2" width="7" height="7" /><circle cx="15" cy="10" r="3.5" /><path d="M8 14L13 23H3Z" /></S>
        </Seg>
        <Seg className="ml-[3px] w-[79px]">
          <Sc className="w-[36px]">
            <S w={32} h={33} sw={1}><path d="M3 6H24V24H3Z" fill="#3f7fc4" stroke="none" /><path d="M14 1V14M3 7H24" stroke="#d6e4f4" strokeWidth="2" /><rect x="3" y="14" width="11" height="13" fill={Y} stroke="none" /><path d="M15 22L21 30L31 14" stroke="#41b45a" strokeWidth="4" /></S>
          </Sc>
          <Sc className="w-[42px]">
            <S w={24} h={26} sw={1.2}><circle cx="6" cy="6" r="4" /><path d="M6 2V10M12 10H20M11 10V22H4" /><path d="M17 12L24 25H10Z" fill="#e0a456" stroke="none" /></S>
          </Sc>
        </Seg>
        <Seg className="ml-[3px] w-[67px]">
          <Sc className="w-[36px]"><S w={24} h={22} sw={1.4}><rect x="1" y="2" width="22" height="18" /><path d="M5 16L10 11M5 11V16H10M19 6L14 11M14 6H19V11" /></S></Sc>
          <Sc className="w-[31px]"><S w={22} h={24} sw={3}><path d="M1 5H21M1 12H21M1 19H21" /></S></Sc>
        </Seg>
      </div>
    </div>
  );
}

function Taskbar() {
  return (
    <div className="h-[54px] shrink-0 bg-gradient-to-r from-[#dde4e9] via-[#e2e6e6] to-[#e1e6ea] flex items-center text-[#1a1a1a] relative">
      <Cell className="w-[64px]"><FaWindows size={23} color="#111" /></Cell>
      <Cell className="w-[69px]"><S w={26} h={30} sw={1.5}><circle cx="16" cy="11" r="8" stroke="#222" /><path d="M10 17L2 28" stroke="#222" /></S></Cell>
      <Cell className="w-[58px]"><div className="w-[21px] h-[24px] rounded-full border-[3px] border-[#111]" /></Cell>
      <Cell className="w-[69px]"><S w={26} h={30} sw={2}><path d="M3 4H19M3 26H19M3 9V21H19V9Z" stroke="#222" /><path d="M24 5V10M24 20V26" stroke="#222" /><rect x="22" y="12" width="4" height="4" fill="#222" stroke="none" /></S></Cell>
      <Cell className="w-[20px]"><S w={8} h={40} sw={1.6}><path d="M1.5 0V40M6.5 0V40" stroke="#222" /></S></Cell>
      <div className="w-[8px]" />
      <div className="w-[64px] h-[54px] bg-[#eef1f3] border-b-[3px] border-[#0a78d4] flex items-center justify-center">
        <div className="w-[30px] h-[30px] bg-[#f4e3d8] flex items-center justify-center"><ALogo s={26} /></div>
      </div>
      <div className="w-[1030px]" />
      <Cell className="w-[22px]"><S w={16} h={10} sw={1.4}><path d="M1 9L8 1L15 9" stroke="#222" /></S></Cell>
      <Cell className="w-[40px]"><S w={24} h={24} sw={1.3}><path d="M2 9H6L11 4V20L6 15H2Z" stroke="#222" /><path d="M14 8C16 10 16 14 14 16M17 6C20 9 20 15 17 18" stroke="#555" /></S></Cell>
      <Cell className="w-[30px]"><S w={24} h={24} sw={1.3}><circle cx="11" cy="11" r="10" stroke="#222" /><ellipse cx="11" cy="11" rx="4.5" ry="10" stroke="#222" /><path d="M1 11H21M2 6H20M2 16H20" stroke="#222" /><circle cx="18" cy="18" r="4.5" fill="#e1e6ea" stroke="#222" /><path d="M15 21L21 15" stroke="#222" /></S></Cell>
      <Cell className="w-[29px] text-[20px] leading-none">英</Cell>
      <div className="w-[3px]" />
      <div className="w-[150px] flex flex-col items-center text-[16.5px] leading-[24px] whitespace-nowrap">
        <span>21:45</span>
        <span>2022/11/17 星期四</span>
      </div>
      <div className="w-[36px]" />
      <S w={24} h={26} sw={1.5}><path d="M2 2H22V20H15L11 25V20H2Z" stroke="#222" /></S>
    </div>
  );
}

export default function App() {
  return (
    <div className="w-[1728px] h-[1080px] overflow-hidden flex flex-col bg-[#1f292f] [font-family:'Noto_Sans','Noto_Sans_CJK_SC',sans-serif]">
      <div className="h-[58px] shrink-0 flex">
        <div className="w-[52px] h-[52px] shrink-0 bg-gradient-to-br from-[#d6d6d6] to-[#a9a9a9] flex items-center pl-[2px] shadow-[1px_1px_0_#0c1013]">
          <ALogo s={36} />
          <Caret s={8} c="#4a4a4a" />
        </div>
        <div className="flex-1 min-w-0">
          <TitleBar />
          <Tabs />
        </div>
      </div>
      <Ribbon />
      <DocTabs />
      <Main />
      <StatusRow />
      <Taskbar />
    </div>
  );
}
